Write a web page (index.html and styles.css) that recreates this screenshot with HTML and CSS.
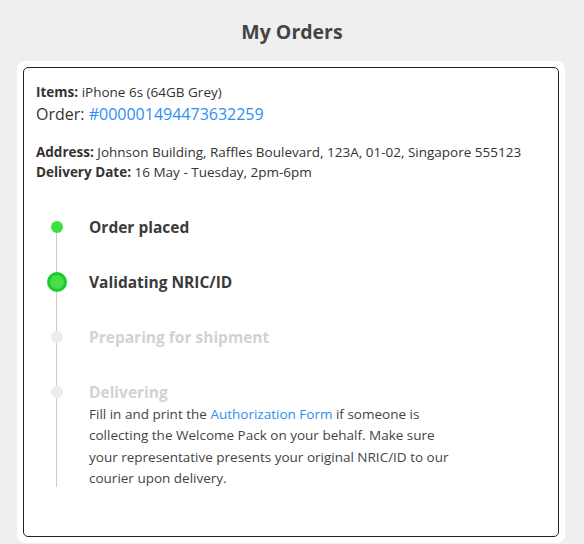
FILE: index.html
```html
<!DOCTYPE html>
<html lang="en">
<head>
  <meta charset="UTF-8">
  <title>My Orders</title>
  <meta name="viewport" content="width=device-width, initial-scale=1.0">
  <link rel="stylesheet" href="styles.css">
</head>
<body>

<h1 class="page-title">My Orders</h1>

<div class="orders-wrap">
  <div class="order-card">
    <div class="order-info">
      <div><b>Items:</b> iPhone 6s (64GB Grey)</div>
      <div class="order-no">Order: <a href="#">#000001494473632259</a></div>
    </div>

    <div class="order-info delivery">
      <div><b>Address:</b> Johnson Building, Raffles Boulevard, 123A, 01-02, Singapore 555123</div>
      <div><b>Delivery Date:</b> 16 May - Tuesday, 2pm-6pm</div>
    </div>

    <ul class="timeline">
      <li class="step done">
        <span class="dot"></span>
        <div class="step-title">Order placed</div>
      </li>
      <li class="step current">
        <span class="dot"></span>
        <div class="step-title">Validating NRIC/ID</div>
      </li>
      <li class="step">
        <span class="dot"></span>
        <div class="step-title">Preparing for shipment</div>
      </li>
      <li class="step">
        <span class="dot"></span>
        <div class="step-title">Delivering</div>
        <p class="step-note">Fill in and print the <a href="#">Authorization Form</a> if someone is collecting the Welcome Pack on your behalf. Make sure your representative presents your original NRIC/ID to our courier upon delivery.</p>
      </li>
    </ul>
  </div>
</div>

</body>
</html>
```

FILE: styles.css
```css
* {
  box-sizing: border-box;
}

body {
  margin: 0;
  background: #efefef;
  font-family: "Open Sans", Arial, sans-serif;
  color: #333;
}

a {
  color: #2d8ff2;
  text-decoration: none;
}

.page-title {
  margin: 0;
  padding: 18px 0 15px;
  font-size: 19.5px;
  line-height: 28px;
  font-weight: 700;
  text-align: center;
  color: #444;
}

.orders-wrap {
  width: 548px;
  margin: 0 0 0 17px;
  padding: 6px;
  background: #fff;
  border-radius: 8px;
}

.order-card {
  border: 1px solid #222;
  border-radius: 5px;
  padding: 14px 12px 47px;
}

.order-info {
  font-size: 13.5px;
  line-height: 20px;
}

.order-no {
  font-size: 16px;
  line-height: 24px;
}

.delivery {
  margin-top: 16px;
}

.timeline {
  position: relative;
  list-style: none;
  margin: 34px 0 0;
  padding: 0;
}

.timeline::before {
  content: "";
  position: absolute;
  left: 20px;
  top: 11px;
  bottom: 2px;
  width: 1px;
  background: #ccc;
}

.step {
  position: relative;
  padding-left: 53px;
  margin-bottom: 33px;
}

.step:last-child {
  margin-bottom: 0;
}

.step .dot {
  position: absolute;
  left: 15px;
  top: 5px;
  width: 12px;
  height: 12px;
  border-radius: 50%;
  background: #ececec;
}

.step.done .dot {
  background: #3ee03e;
}

.step.current .dot {
  left: 11px;
  top: 1px;
  width: 20px;
  height: 20px;
  background: #48de48;
  border: 3px solid #17cc2c;
}

.step-title {
  font-size: 15.5px;
  line-height: 22px;
  font-weight: 700;
  color: #d2d2d2;
}

.step.done .step-title,
.step.current .step-title {
  color: #3a3a3a;
}

.step-note {
  margin: 1px 0 0;
  max-width: 370px;
  font-size: 13.5px;
  line-height: 21.3px;
  color: #444;
}
```
